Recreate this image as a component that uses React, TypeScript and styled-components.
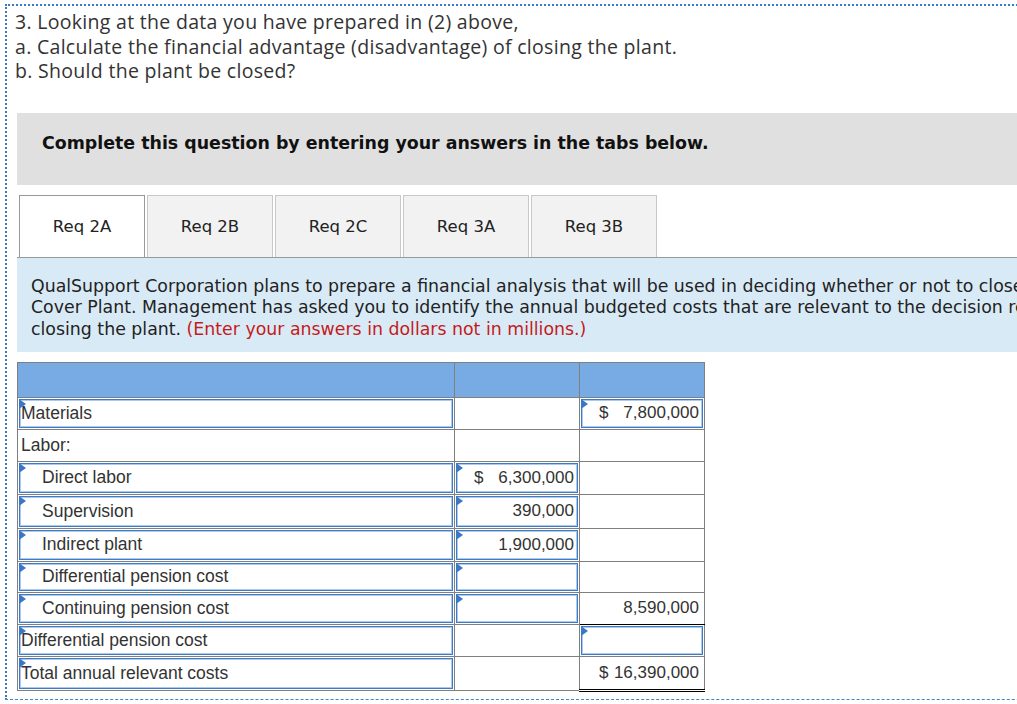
import React from "react";
import styled, { createGlobalStyle, css } from "styled-components";

const GlobalStyle = createGlobalStyle`
  html, body {
    margin: 0;
    padding: 0;
    background: #fff;
    overflow: hidden;
  }
`;

type Cell = {
  text?: string;
  dollar?: boolean;
  input?: boolean;
  rule?: "single" | "double";
};

type Row = {
  label: string;
  indent?: boolean;
  labelInput: boolean;
  height: number;
  mid: Cell;
  right: Cell;
};

const rows: Row[] = [
  { label: "Materials", labelInput: true, height: 32, mid: {}, right: { input: true, dollar: true, text: "7,800,000" } },
  { label: "Labor:", labelInput: false, height: 32, mid: {}, right: {} },
  { label: "Direct labor", indent: true, labelInput: true, height: 33, mid: { input: true, dollar: true, text: "6,300,000" }, right: {} },
  { label: "Supervision", indent: true, labelInput: true, height: 34, mid: { input: true, text: "390,000" }, right: {} },
  { label: "Indirect plant", indent: true, labelInput: true, height: 33, mid: { input: true, text: "1,900,000" }, right: {} },
  { label: "Differential pension cost", indent: true, labelInput: true, height: 31, mid: { input: true }, right: {} },
  { label: "Continuing pension cost", indent: true, labelInput: true, height: 32, mid: { input: true }, right: { text: "8,590,000", rule: "single" } },
  { label: "Differential pension cost", labelInput: true, height: 32, mid: {}, right: { input: true } },
  { label: "Total annual relevant costs", labelInput: true, height: 34, mid: {}, right: { dollar: true, text: "16,390,000", rule: "double" } },
];

const tabs = ["Req 2A", "Req 2B", "Req 2C", "Req 3A", "Req 3B"];

export default function App() {
  return (
    <>
      <GlobalStyle />
      <Frame>
        <Question>
          <span>3. Looking at the data you have prepared in (2) above,</span>
          <span>a. Calculate the financial advantage (disadvantage) of closing the plant.</span>
          <span>b. Should the plant be closed?</span>
        </Question>
        <Section>
          <Instruction>Complete this question by entering your answers in the tabs below.</Instruction>
          <TabStrip>
            {tabs.map((t, i) => (
              <Tab key={t} $active={i === 0}>
                {t}
              </Tab>
            ))}
          </TabStrip>
          <Panel>
            <Line>
              QualSupport Corporation plans to prepare a financial analysis that will be used in deciding whether or not to close the
            </Line>
            <Line>
              Cover Plant. Management has asked you to identify the annual budgeted costs that are relevant to the decision regarding
            </Line>
            <Line>
              closing the plant. <Note>(Enter your answers in dollars not in millions.)</Note>
            </Line>
          </Panel>
          <Sheet>
            <colgroup>
              <col style={{ width: 437 }} />
              <col style={{ width: 125 }} />
              <col style={{ width: 125 }} />
            </colgroup>
            <thead>
              <tr>
                <HeadCell />
                <HeadCell />
                <HeadCell />
              </tr>
            </thead>
            <tbody>
              {rows.map((r, i) => (
                <tr key={i} style={{ height: r.height }}>
                  <LabelCell $input={r.labelInput} $indent={r.indent}>
                    {r.label}
                  </LabelCell>
                  <ValueCell cell={r.mid} />
                  <ValueCell cell={r.right} />
                </tr>
              ))}
            </tbody>
          </Sheet>
        </Section>
      </Frame>
    </>
  );
}

const ValueCell = ({ cell }: { cell: Cell }) => (
  <AmountCell $input={cell.input} $rule={cell.rule}>
    {cell.text && (
      <Amount>
        <span>{cell.dollar ? "$" : ""}</span>
        <span>{cell.text}</span>
      </Amount>
    )}
  </AmountCell>
);

const Frame = styled.div`
  margin: 4px 0 0 5px;
  width: 1100px;
  height: 696px;
  box-sizing: border-box;
  border-top: 2px dotted #3b78c6;
  border-left: 2px dotted #3b78c6;
  border-bottom: 1px dashed #4a80c6;
  padding-top: 4px;
`;

const Question = styled.div`
  display: flex;
  flex-direction: column;
  padding-left: 8px;
  font-family: "Open Sans", Lato, sans-serif;
  font-size: 19.5px;
  letter-spacing: 0.3px;
  line-height: 24.5px;
  color: #333;
`;

const Section = styled.div`
  margin: 29px 0 0 10px;
`;

const Instruction = styled.div`
  height: 72px;
  box-sizing: border-box;
  display: flex;
  align-items: center;
  padding: 0 0 12px 25px;
  background: #e0e0e0;
  font-family: "DejaVu Sans", Verdana, sans-serif;
  font-weight: bold;
  font-size: 17.4px;
  color: #111;
`;

const TabStrip = styled.div`
  display: flex;
  gap: 2px;
  margin-top: 10px;
  padding-left: 2px;
  border-bottom: 1px solid #999;
`;

const Tab = styled.div<{ $active?: boolean }>`
  width: 126px;
  height: 62px;
  box-sizing: border-box;
  display: flex;
  align-items: center;
  justify-content: center;
  font-family: "DejaVu Sans", Verdana, sans-serif;
  font-size: 16.5px;
  color: #222;
  background: #f2f2f2;
  border: 1px solid #c8c8c8;
  border-bottom: none;
  ${(p) =>
    p.$active &&
    css`
      background: #fff;
      border-color: #999;
    `}
`;

const Panel = styled.div`
  height: 94px;
  box-sizing: border-box;
  padding: 18px 0 0 14px;
  background: #d9eaf7;
  font-family: "DejaVu Sans", Verdana, sans-serif;
  font-size: 17.35px;
  line-height: 21.5px;
  color: #222;
`;

const Line = styled.span`
  display: block;
  white-space: nowrap;
`;

const Note = styled.span`
  color: #c41a1a;
`;

const Sheet = styled.table`
  margin-top: 10px;
  width: 688px;
  table-layout: fixed;
  border-collapse: collapse;
  font-family: "Liberation Sans", Arial, sans-serif;
  font-size: 17.5px;
  color: #333;
`;

const HeadCell = styled.th`
  height: 34px;
  padding: 0;
  background: #78abe3;
  border: 1px solid #7f7f7f;
`;

const inputField = css`
  position: relative;
  box-shadow: inset 0 0 0 1px #fff, inset 0 0 0 2px #3f7ac4, inset 0 0 0 3px #adc9ee;

  &::before {
    content: "";
    position: absolute;
    top: 1px;
    left: 1px;
    border-top: 5px solid transparent;
    border-bottom: 5px solid transparent;
    border-left: 7px solid #3a78c6;
    height: 0;
  }
`;

const LabelCell = styled.td<{ $input?: boolean; $indent?: boolean }>`
  padding: 0 4px 0 ${(p) => (p.$indent ? 24 : 3)}px;
  border: 1px solid #7f7f7f;
  white-space: nowrap;
  ${(p) => p.$input && inputField}
`;

const AmountCell = styled.td<{ $input?: boolean; $rule?: "single" | "double" }>`
  padding: 0 5px 0 19px;
  border: 1px solid #7f7f7f;
  font-size: 17px;
  ${(p) => p.$input && inputField}
  ${(p) => p.$rule === "single" && "border-bottom: 1px solid #000;"}
  ${(p) => p.$rule === "double" && "border-bottom: 3px double #000;"}
`;

const Amount = styled.div`
  display: flex;
  justify-content: space-between;
`;
